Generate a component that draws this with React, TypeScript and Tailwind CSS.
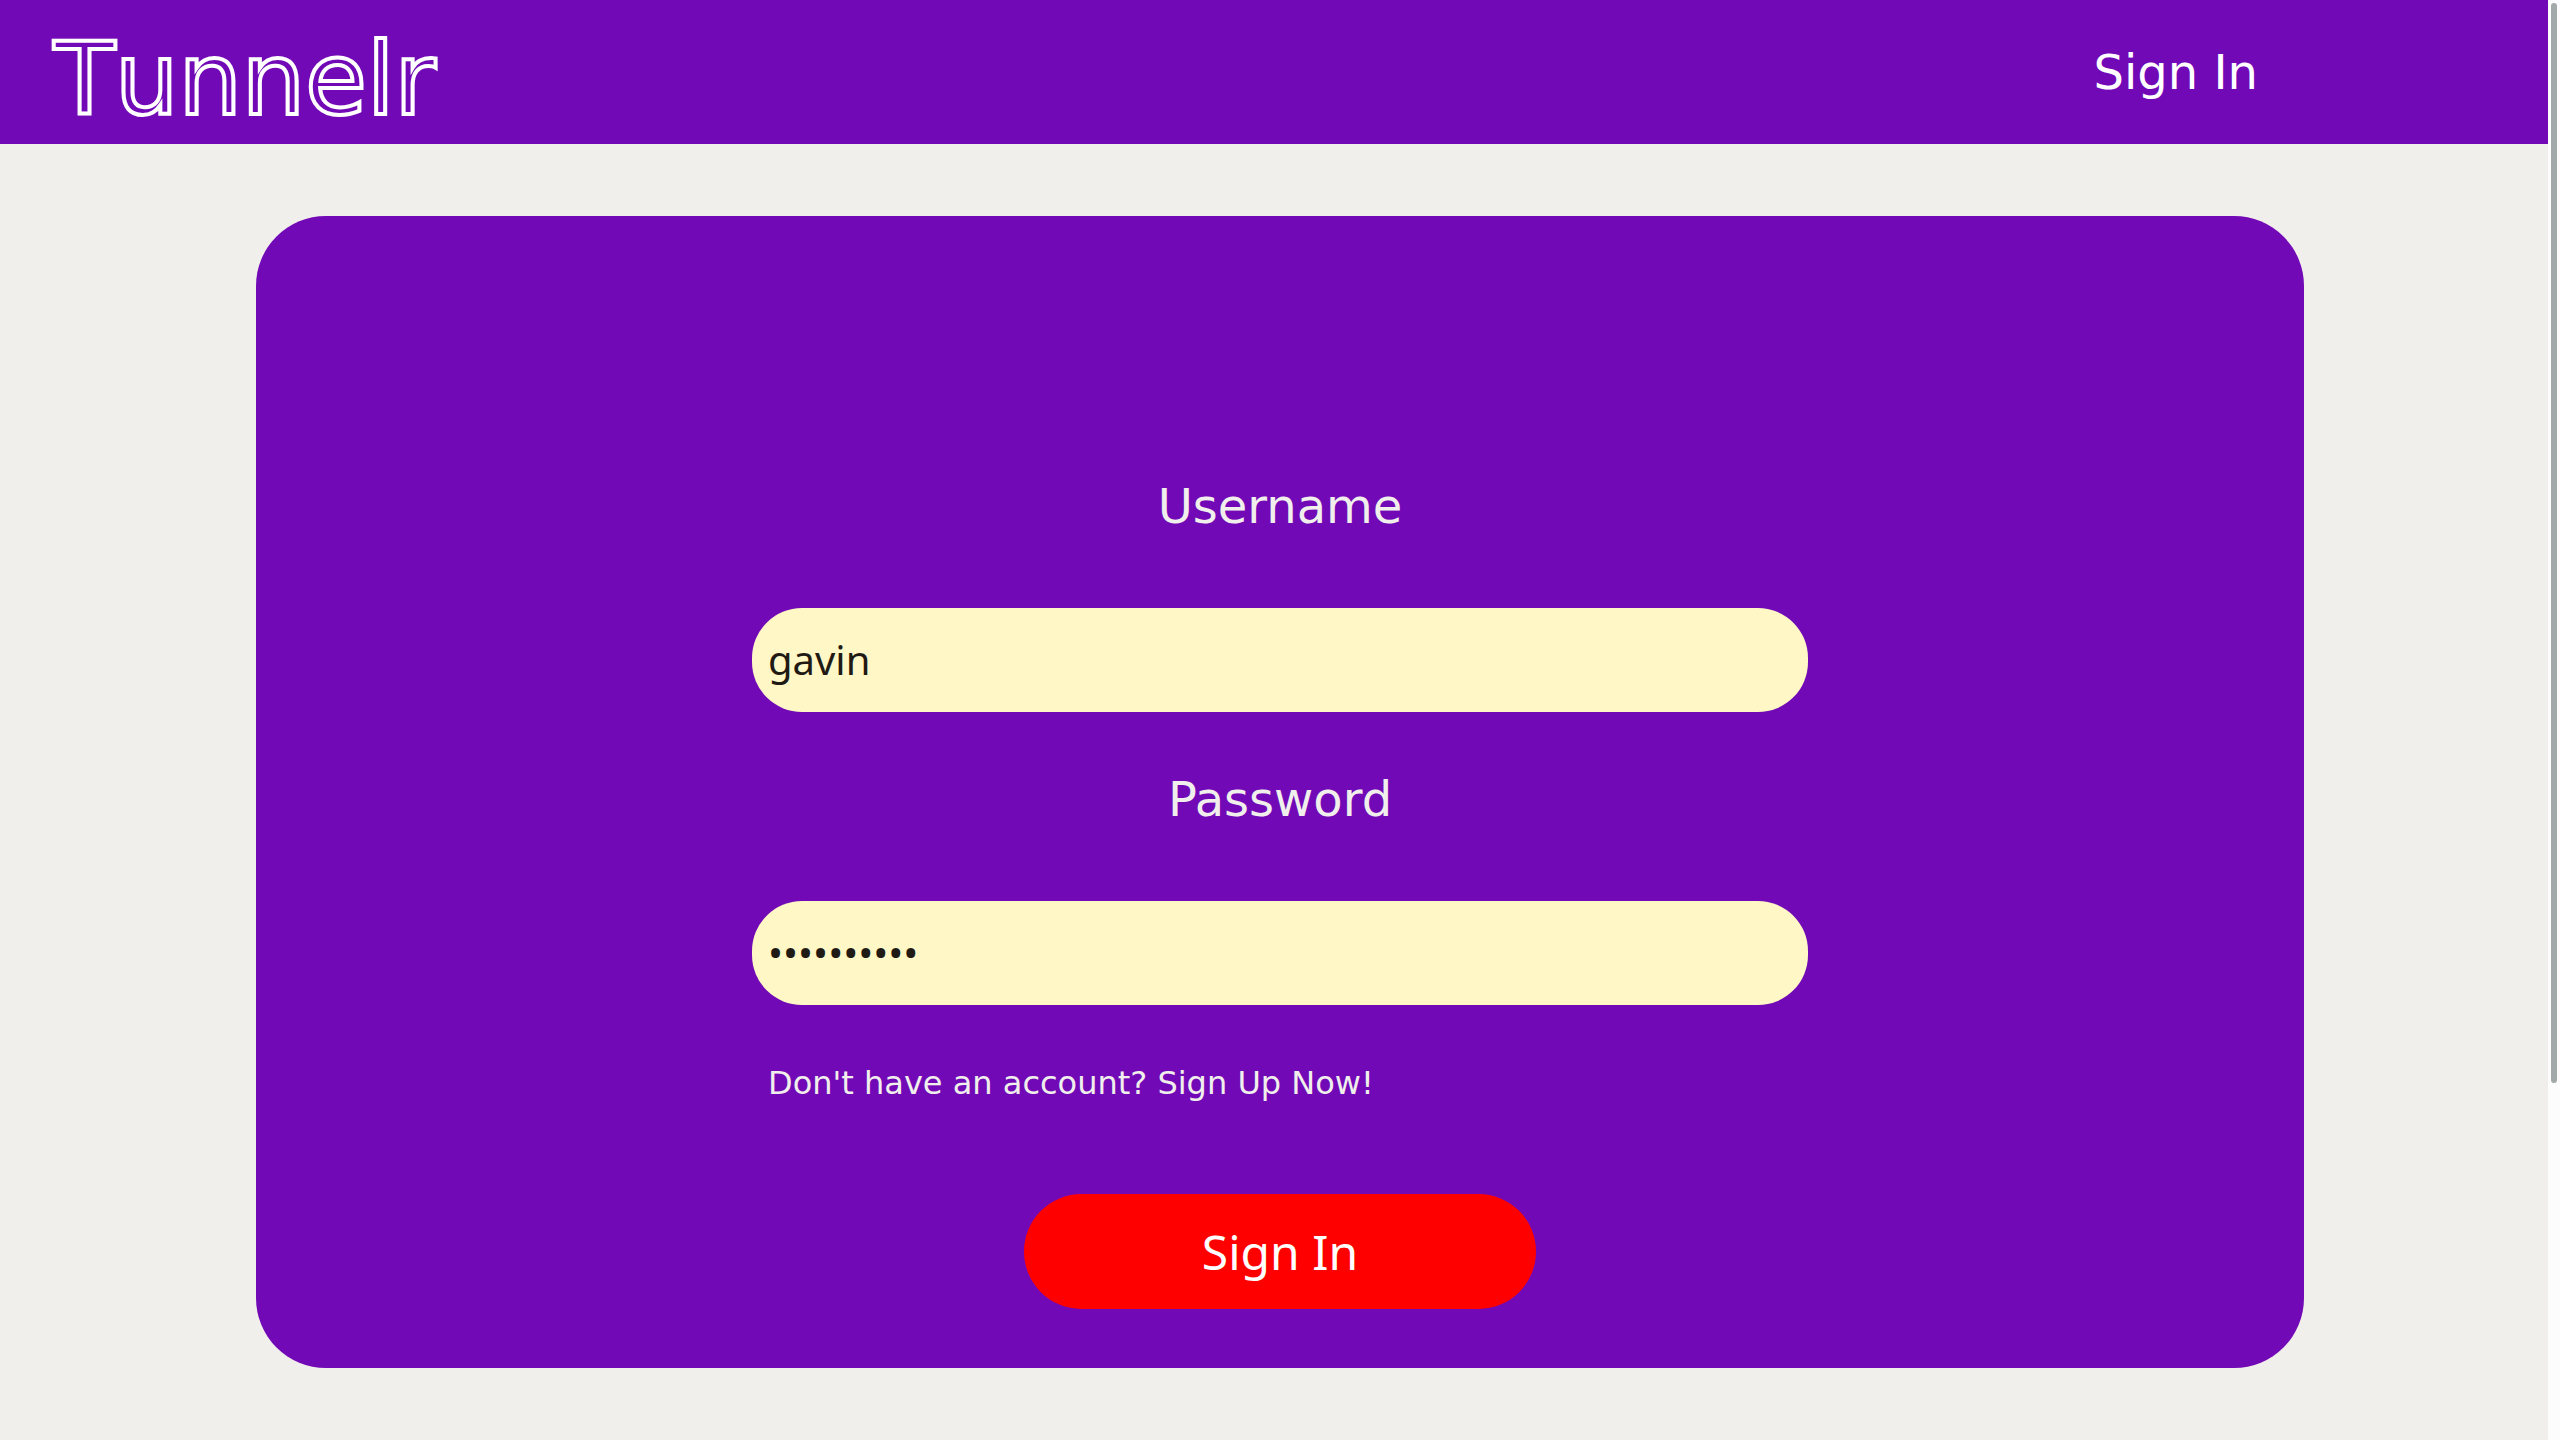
import type { InputHTMLAttributes } from "react";

type FieldProps = InputHTMLAttributes<HTMLInputElement> & { label: string; id: string };

function Field({ label, id, ...input }: FieldProps) {
  return (
    <div className="flex w-full flex-col items-center gap-[74px]">
      <label htmlFor={id} className="text-[48px] leading-[56px] text-[#f0efeb]">
        {label}
      </label>
      <input
        id={id}
        {...input}
        className="h-[104px] w-full rounded-[50px] bg-[#fff7c5] px-4 pb-[2px] font-['Noto_Sans',sans-serif] text-[40px] text-[#1f1b14] outline-none"
      />
    </div>
  );
}

function Header() {
  return (
    <header className="flex h-36 items-center justify-between bg-[#7209b7] pr-[290px] pl-[54px] text-white">
      <a
        href="#home"
        className="pt-4 text-[100px] leading-[128px] text-transparent [-webkit-text-stroke:4px_white] [font-kerning:none]"
      >
        Tunnelr
      </a>
      <nav>
        <a href="#signin" className="text-[48px] leading-[56px]">
          Sign In
        </a>
      </nav>
    </header>
  );
}

export default function App() {
  return (
    <div className="flex min-h-screen bg-[#f0efeb] font-['DejaVu_Sans',sans-serif]">
      <div className="min-w-0 flex-1">
        <Header />
        <main className="pt-18 pr-[244px] pb-18 pl-[256px]">
          <form
            onSubmit={(e) => e.preventDefault()}
            className="flex flex-col items-center rounded-[70px] bg-[#7209b7] pt-[262px] pb-[59px]"
          >
            <div className="flex w-[1056px] max-w-full flex-col gap-[59px]">
              <Field label="Username" id="username" type="text" defaultValue="gavin" />
              <Field label="Password" id="password" type="password" defaultValue="abcdefghij" />
              <a href="#signup" className="pl-4 text-[32px] leading-[38px] text-[#f0efeb]">
                Don't have an account? Sign Up Now!
              </a>
            </div>
            <button
              type="submit"
              className="mt-[92px] h-[115px] w-1/4 rounded-full bg-[#ff0000] font-['Noto_Sans',sans-serif] text-[48px] text-white"
            >
              Sign In
            </button>
          </form>
        </main>
      </div>
      <div aria-hidden="true" className="w-3 bg-[#fcfcfc] pt-[3px] pl-[3px]">
        <div className="h-[1080px] w-[6px] rounded-full bg-[#a3a8a8]" />
      </div>
    </div>
  );
}
